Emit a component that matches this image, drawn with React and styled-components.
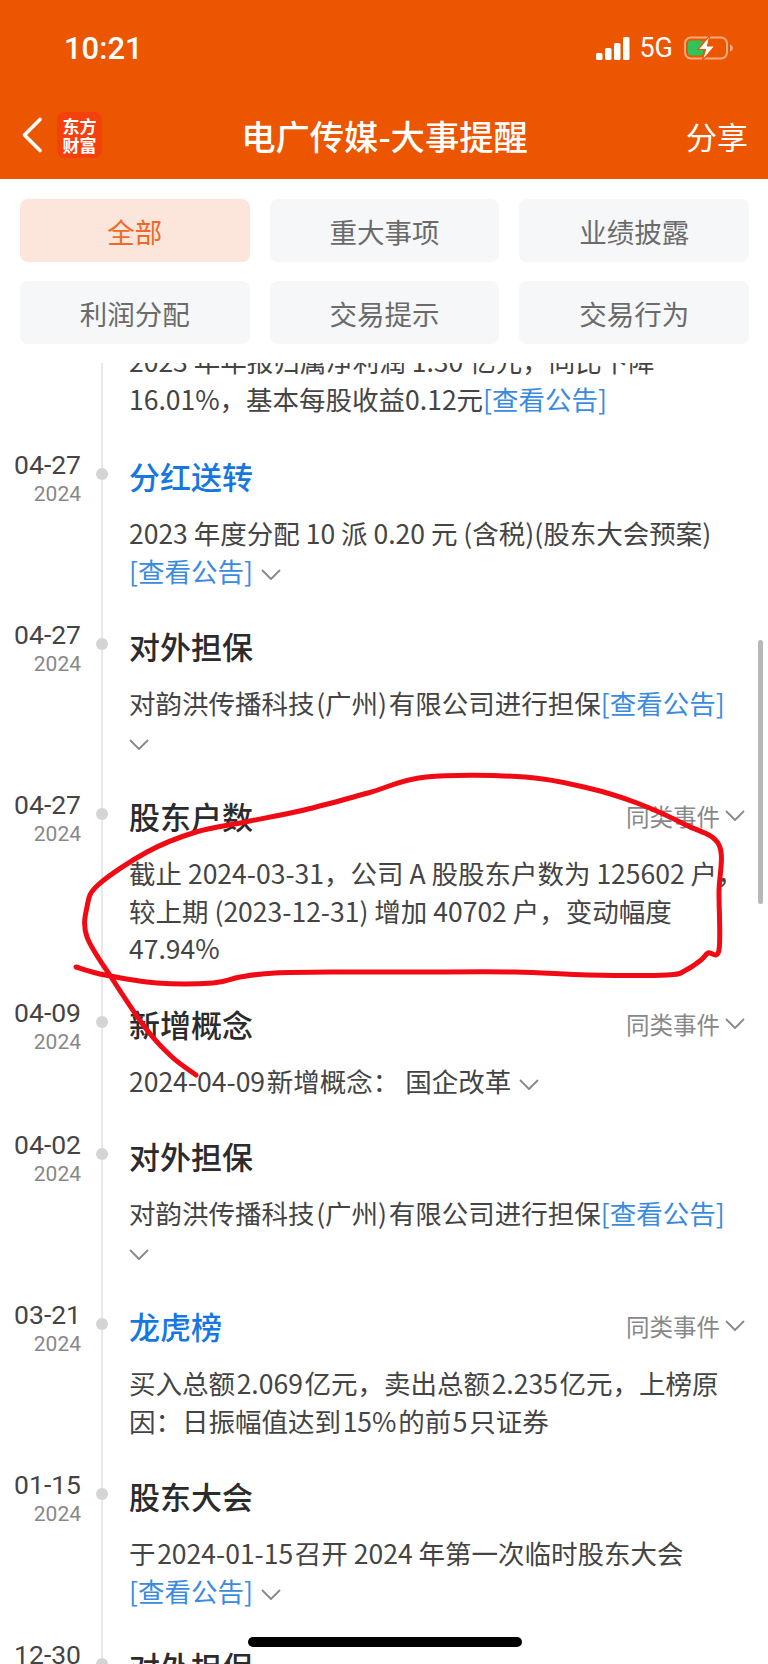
import React from 'react';
import styled, { createGlobalStyle } from 'styled-components';

const TABS = ['全部', '重大事项', '业绩披露', '利润分配', '交易提示', '交易行为'];

const EVENTS = [
    {
        date: '04-27', title: '分红送转', blue: true,
        lines: [['2023 年度分配 10 派 0.20 元 (含税)(股东大会预案)'], ['', 'link', 'chevron']],
    },
    {
        date: '04-27', title: '对外担保',
        lines: [['对韵洪传播科技\u200A(广州)\u200A有限公司进行担保', 'link'], ['', 'chevron']],
    },
    {
        date: '04-27', title: '股东户数', similar: true,
        lines: [['截止 2024-03-31，公司 A 股股东户数为 125602 户，'], ['较上期 (2023-12-31) 增加 40702 户，变动幅度'], ['47.94%']],
    },
    {
        date: '04-09', title: '新增概念', similar: true,
        lines: [['2024-04-09\u200A新增概念： 国企改革', 'chevron']],
    },
    {
        date: '04-02', title: '对外担保',
        lines: [['对韵洪传播科技\u200A(广州)\u200A有限公司进行担保', 'link'], ['', 'chevron']],
    },
    {
        date: '03-21', title: '龙虎榜', blue: true, similar: true,
        lines: [['买入总额\u200A2.069\u200A亿元，卖出总额\u200A2.235\u200A亿元，上榜原'], ['因：日振幅值达到\u200A15%\u200A的前\u200A5\u200A只证券']],
    },
    {
        date: '01-15', title: '股东大会',
        lines: [['于\u200A2024-01-15\u200A召开 2024 年第一次临时股东大会'], ['', 'link', 'chevron']],
    },
    { date: '12-30', year: '2023', title: '对外担保', lines: [] },
];

// the red circle somebody scribbled over the screenshot
const SCRIBBLE = [
    [76, 967], [105, 975], [157, 983], [213, 983], [240, 977], [275, 973], [343, 972], [417, 972],
    [515, 972], [588, 975], [667, 975], [686, 970], [701, 960], [708, 953], [719, 950], [719, 893],
    [719, 845], [686, 825], [637, 803], [588, 788], [525, 777], [426, 777], [368, 793], [304, 810],
    [245, 822], [196, 832], [147, 852], [98, 885], [87, 907], [87, 937], [113, 980], [147, 1030],
    [172, 1057], [196, 1075],
];

function smoothPath(points) {
    let d = `M${points[0][0]} ${points[0][1]}`;
    for (let i = 0; i < points.length - 1; i++) {
        const p0 = points[i - 1] || points[i];
        const p1 = points[i];
        const p2 = points[i + 1];
        const p3 = points[i + 2] || p2;
        const c1 = [p1[0] + (p2[0] - p0[0]) / 6, p1[1] + (p2[1] - p0[1]) / 6];
        const c2 = [p2[0] - (p3[0] - p1[0]) / 6, p2[1] - (p3[1] - p1[1]) / 6];
        d += ` C${c1[0]} ${c1[1]} ${c2[0]} ${c2[1]} ${p2[0]} ${p2[1]}`;
    }
    return d;
}

export default function App() {
    return <>
        <GlobalStyle />
        <Page>
            <Header>
                <StatusBar>
                    <Clock>10:21</Clock>
                    <StatusIcons>
                        <SignalIcon />
                        <Network>5G</Network>
                        <BatteryIcon />
                    </StatusIcons>
                </StatusBar>
                <NavBar>
                    <NavLeft>
                        <BackIcon />
                        <Logo>东方<br />财富</Logo>
                    </NavLeft>
                    <NavTitle>电广传媒-大事提醒</NavTitle>
                    <Share>分享</Share>
                </NavBar>
            </Header>

            <Tabs>
                {TABS.map((tab, i) => <Tab key={tab} $active={i === 0}>{tab}</Tab>)}
            </Tabs>

            <Timeline>
                <List>
                    <Entry $tail>
                        <DateCol />
                        <Rail />
                        <Content>
                            <BodyLine>2023 年年报归属净利润 1.30 亿元，同比下降</BodyLine>
                            <BodyLine>16.01%，基本每股收益0.12元<Link>[查看公告]</Link></BodyLine>
                        </Content>
                    </Entry>
                    {EVENTS.map((event, i) => <Event key={i} {...event} />)}
                </List>
            </Timeline>

            <Scribble viewBox='0 0 768 1664'>
                <path d={smoothPath(SCRIBBLE)} fill='none' stroke='#f00a14' strokeWidth='5' strokeLinecap='round' strokeLinejoin='round' />
            </Scribble>
            <ScrollThumb />
            <HomeIndicator />
        </Page>
    </>
}

function Event({ date, year = '2024', title, blue, similar, lines }) {
    return <Entry>
        <DateCol>
            <DateText>{date}</DateText>
            <YearText>{year}</YearText>
        </DateCol>
        <Rail><Dot /></Rail>
        <Content>
            <TitleRow>
                <Title $blue={blue}>{title}</Title>
                {similar && <Similar>同类事件<Chevron $wide /></Similar>}
            </TitleRow>
            <Body>
                {lines.map(([text, a, b], i) => <BodyLine key={i}>
                    {text}
                    {(a === 'link' || b === 'link') && <Link>[查看公告]</Link>}
                    {(a === 'chevron' || b === 'chevron') && <Chevron $inline={!!text || a === 'link'} />}
                </BodyLine>)}
            </Body>
        </Content>
    </Entry>
}

function Chevron({ $inline, $wide }) {
    return <ChevronSvg $inline={$inline} $wide={$wide} viewBox='0 0 20 12'>
        <path d='M1.5 1.5 L10 10 L18.5 1.5' fill='none' stroke='#888' strokeWidth='1.8' strokeLinecap='round' strokeLinejoin='round' />
    </ChevronSvg>
}

function SignalIcon() {
    return <svg width='34' height='23' viewBox='0 0 34 23'>
        <rect x='0' y='16' width='6.5' height='7' rx='1.6' fill='#fff' />
        <rect x='9' y='11' width='6.5' height='12' rx='1.6' fill='#fff' />
        <rect x='18' y='6' width='6.5' height='17' rx='1.6' fill='#fff' />
        <rect x='27' y='0' width='6.5' height='23' rx='1.6' fill='#fff' />
    </svg>
}

function BatteryIcon() {
    return <svg width='50' height='26' viewBox='0 0 50 26'>
        <rect x='1' y='2.5' width='42' height='21' rx='6' fill='none' stroke='#f6ab80' strokeWidth='2' />
        <path d='M46 9.5 C48 10 49 11.5 49 13 C49 14.5 48 16 46 16.5 Z' fill='#f6ab80' />
        <rect x='4' y='5.5' width='15' height='15' rx='3' fill='#2fc35a' />
        <path d='M26 0 L14 14.5 H21.5 L18 26 L31 11 H23.5 Z' fill='#fff' stroke='#ec5600' strokeWidth='1.2' strokeLinejoin='round' />
    </svg>
}

function BackIcon() {
    return <svg width='22' height='36' viewBox='0 0 22 36'>
        <path d='M19 2.5 L3.5 18 L19 33.5' fill='none' stroke='#fff' strokeWidth='3.6' strokeLinecap='round' strokeLinejoin='round' />
    </svg>
}

const GlobalStyle = createGlobalStyle`
    html, body {
        margin: 0;
        padding: 0;
        background: #fff;
    }

    * {
        box-sizing: border-box;
    }
`;

const Page = styled.div`
    position: relative;
    display: flex;
    flex-direction: column;
    width: 768px;
    height: 1664px;
    overflow: hidden;
    background-color: #fff;
    font-family: "Noto Sans CJK SC", "Noto Sans", sans-serif;
`;

const Header = styled.header`
    flex-shrink: 0;
    height: 179px;
    background-color: #ec5600;
    color: #fff;
`;

const StatusBar = styled.div`
    display: flex;
    align-items: center;
    justify-content: space-between;
    height: 96px;
    padding: 0 34px 0 64px;
`;

const Clock = styled.span`
    font-family: Roboto, sans-serif;
    font-size: 31px;
    font-weight: 500;
`;

const StatusIcons = styled.div`
    display: flex;
    align-items: center;
`;

const Network = styled.span`
    margin: 0 11px 0 9px;
    font-family: Roboto, sans-serif;
    font-size: 27px;
`;

const NavBar = styled.div`
    display: grid;
    grid-template-columns: 1fr auto 1fr;
    align-items: center;
    height: 78px;
    padding: 0 20px 0 21px;
`;

const NavLeft = styled.div`
    display: flex;
    align-items: center;
    gap: 14px;
`;

const Logo = styled.div`
    width: 45px;
    height: 46px;
    padding-top: 4px;
    border-radius: 8px;
    background-color: #f4400c;
    color: #fff;
    font-size: 17px;
    font-weight: 700;
    line-height: 19px;
    text-align: center;
`;

const NavTitle = styled.h1`
    margin: 0;
    font-size: 34.3px;
    font-weight: 500;
    line-height: 40px;
`;

const Share = styled.span`
    justify-self: end;
    font-size: 31px;
`;

const Tabs = styled.nav`
    flex-shrink: 0;
    display: grid;
    grid-template-columns: repeat(3, 1fr);
    grid-auto-rows: 63px;
    gap: 19px 20px;
    height: 184px;
    padding: 20px 19px 0 20px;
`;

const Tab = styled.div`
    display: flex;
    align-items: center;
    justify-content: center;
    border-radius: 8px;
    background-color: ${props => props.$active ? '#fce6dc' : '#f6f7f9'};
    color: ${props => props.$active ? '#ee6a2a' : '#6b6b6b'};
    font-size: 27.5px;
`;

const Timeline = styled.main`
    position: relative;
    flex: 1;
    min-height: 0;
    overflow: hidden;

    &::before {
        content: '';
        position: absolute;
        top: 0;
        bottom: 0;
        left: 101px;
        width: 2px;
        background-color: #e8e8e8;
    }
`;

const List = styled.div`
    margin-top: -21px;
`;

const Entry = styled.section`
    display: grid;
    grid-template-columns: 81px 42px 1fr;
    padding: 0 23px 0 0;
    padding-bottom: ${props => props.$tail ? '33px' : '31px'};
`;

const DateCol = styled.div`
    display: flex;
    flex-direction: column;
    align-items: flex-end;
`;

const DateText = styled.span`
    font-family: Roboto, sans-serif;
    font-size: 26.5px;
    line-height: 30px;
    color: #444;
`;

const YearText = styled.span`
    font-family: Roboto, sans-serif;
    font-size: 21px;
    line-height: 28px;
    color: #888;
`;

const Rail = styled.div`
    position: relative;
    display: flex;
    justify-content: center;
    padding-top: 18px;
`;

const Dot = styled.span`
    position: relative;
    width: 12px;
    height: 12px;
    border-radius: 50%;
    background-color: #d4d4d4;
`;

const Content = styled.div`
    min-width: 0;
    padding-left: 6px;
`;

const TitleRow = styled.div`
    display: flex;
    align-items: center;
    justify-content: space-between;
    height: 40px;
    margin-top: 6px;
`;

const Title = styled.h2`
    margin: 0;
    font-size: 31px;
    font-weight: 500;
    line-height: 40px;
    color: ${props => props.$blue ? '#1677e0' : '#2b2b2b'};
`;

const Similar = styled.span`
    display: flex;
    align-items: center;
    font-size: 23.5px;
    color: #888;
`;

const Body = styled.div`
    margin-top: 18px;
`;

const BodyLine = styled.div`
    font-size: 26.5px;
    line-height: 37.5px;
    white-space: nowrap;
    color: #444;
`;

const Link = styled.span`
    color: #3a8be0;
`;

const ChevronSvg = styled.svg`
    display: inline-block;
    width: 20px;
    height: 12px;
    margin-left: ${props => props.$inline ? '8px' : props.$wide ? '5px' : '0'};
    vertical-align: 1px;
`;

const Scribble = styled.svg`
    position: absolute;
    top: 0;
    left: 0;
    width: 768px;
    height: 1664px;
    pointer-events: none;
`;

const ScrollThumb = styled.div`
    position: absolute;
    top: 640px;
    right: 5px;
    width: 5px;
    height: 264px;
    border-radius: 3px;
    background-color: #b8b8b8;
`;

const HomeIndicator = styled.div`
    position: absolute;
    top: 1637px;
    left: 248px;
    width: 274px;
    height: 10px;
    border-radius: 5px;
    background-color: #000;
`;
